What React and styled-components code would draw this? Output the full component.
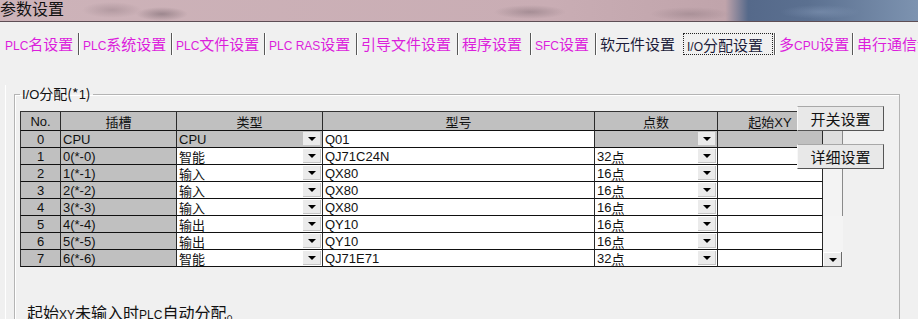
import React from "react";
import styled, { createGlobalStyle } from "styled-components";

const SANS = `"Liberation Sans", "Noto Sans CJK SC", sans-serif`;
const CJK = `"Noto Sans CJK SC", sans-serif`;

const Global = createGlobalStyle`
  html, body { margin: 0; padding: 0; background: #f0f0f0; }
  body { width: 918px; height: 319px; overflow: hidden; font-family: ${SANS}; color: #111; }
`;

const Window = styled.div`
  width: 918px;
  height: 319px;
  overflow: hidden;
  background: #f0f0f0;
`;

const TitleBar = styled.div`
  height: 21px;
  border-bottom: 1px solid #5e4e55;
  background:
    radial-gradient(ellipse 30px 8px at 112px 10px, rgba(120, 100, 108, 0.3), transparent),
    radial-gradient(ellipse 26px 7px at 162px 14px, rgba(100, 84, 92, 0.45), transparent),
    radial-gradient(ellipse 36px 7px at 530px 12px, rgba(100, 84, 92, 0.35), transparent),
    radial-gradient(ellipse 40px 7px at 690px 14px, rgba(100, 84, 92, 0.25), transparent),
    radial-gradient(ellipse 40px 7px at 820px 12px, rgba(150, 170, 200, 0.35), transparent),
    linear-gradient(90deg, #cdb3b9 0%, #c9adb4 60%, #c0a4ab 79%, #55698a 81.5%, #5b7090 88%, #7d93b0 100%);
  font-family: ${CJK};
  font-size: 16px;
  line-height: 16px;
  overflow: hidden;
`;

const TabRow = styled.div`
  display: flex;
  align-items: center;
  height: 22px;
  padding: 11px 0 2px 5px;
  white-space: nowrap;
  overflow: hidden;
`;

const Tab = styled.div`
  flex: none;
  width: ${(p) => p.$w}px;
  height: 22px;
  line-height: 22px;
  font-family: ${CJK};
  font-size: 15px;
  color: ${(p) => (p.$dark ? "#1c1c3a" : "#dc1edc")};
  overflow: hidden;
`;

const Focus = styled.span`
  display: block;
  box-sizing: border-box;
  width: 90px;
  height: 22px;
  padding-left: 3px;
  border: 1px dotted #222;
`;

const Sep = styled.span`
  flex: none;
  width: 1px;
  height: 22px;
  margin-right: 3px;
  background: #585858;
  border-right: 1px solid #ffffff;
`;

const Lat = styled.span`
  font-family: "Liberation Sans", sans-serif;
  font-size: ${(p) => p.$size}px;
`;

const mixed = (text, size) =>
  text
    .split(/([A-Za-z0-9 /]+)/)
    .map((s, i) => (/[A-Za-z0-9]/.test(s) ? <Lat key={i} $size={size}>{s}</Lat> : s));

const Panel = styled.div`
  margin-left: 5px;
  padding-left: 8px;
  border-left: 1px solid #ffffff;
  height: 262px;
`;

const Group = styled.fieldset`
  box-sizing: border-box;
  width: 886px;
  min-width: 0;
  margin: 28px 0 0 0;
  padding: 8px 0 0 5px;
  border: 1px solid #b4b4b4;
  border-bottom: none;
  box-shadow: inset 1px 1px 0 #ffffff;
`;

const Caption = styled.legend`
  padding: 0 2px;
  font-family: ${CJK};
  font-size: 14px;
  line-height: 17px;
`;

const TableWrap = styled.div`
  position: relative;
  width: 823px;
`;

const Grid = styled.div`
  display: grid;
  grid-template-columns: 41px 116px 146px 272px 123px 105px 20px;
  grid-template-rows: 19px repeat(8, 17px);
  border-top: 1px solid #333;
`;

const Cell = styled.div`
  box-sizing: border-box;
  display: flex;
  align-items: center;
  justify-content: ${(p) => (p.$center ? "center" : "flex-start")};
  padding-left: ${(p) => (p.$center ? 0 : 2)}px;
  border-right: 1px solid #2a2a2a;
  border-bottom: 1px solid #111;
  ${(p) => p.$first && "border-left: 1px solid #333;"}
  background: ${(p) => (p.$gray ? "#c0c0c0" : "#ffffff")};
  font-size: 13px;
  white-space: nowrap;
  overflow: hidden;
`;

const Strip = styled.div`
  box-sizing: border-box;
  display: flex;
  align-items: flex-end;
  background: ${(p) => p.$bg};
  border-right: ${(p) => (p.$line ? "1px solid #8a8a8a" : "none")};
`;

const DropBtn = styled.span`
  flex: none;
  margin-left: auto;
  margin-right: 1px;
  width: ${(p) => (p.$big ? 19 : 18)}px;
  height: ${(p) => (p.$big ? 15 : 14)}px;
  display: flex;
  align-items: center;
  justify-content: center;
  background: #ebebeb;
  box-shadow: ${(p) =>
    p.$big ? "inset -1px -1px 0 #6a6a6a, inset 1px 1px 0 #ffffff" : "inset -1px -1px 0 #c4c4c4"};
  &::after {
    content: "";
    border-left: 4px solid transparent;
    border-right: 4px solid transparent;
    border-top: 4px solid #000;
  }
`;

const Dot = styled.span`
  text-decoration: underline dotted #555;
  text-underline-offset: 2px;
`;

const ButtonStack = styled.div`
  position: absolute;
  left: 777px;
  top: -5px;
  display: flex;
  flex-direction: column;
  gap: 13px;
`;

const SideButton = styled.button`
  box-sizing: border-box;
  width: 87px;
  height: 25px;
  padding: 0;
  background: #e8e8e8;
  border: 1px solid;
  border-color: #a8a8a8 #555555 #555555 #f8f8f8;
  font-family: ${CJK};
  font-size: 15px;
  line-height: 20px;
  color: #111;
`;

const Note = styled.div`
  margin-top: 36px;
  padding-left: 7px;
  font-family: ${CJK};
  font-size: 16px;
  line-height: 18px;
  white-space: nowrap;
`;

const tabs = [
  { label: "PLC名设置", w: 73 },
  { label: "PLC系统设置", w: 88 },
  { label: "PLC文件设置", w: 88 },
  { label: "PLC RAS设置", w: 87 },
  { label: "引导文件设置", w: 96 },
  { label: "程序设置", w: 68 },
  { label: "SFC设置", w: 60 },
  { label: "软元件设置", w: 83, dark: true, noSep: true },
  { label: "I/O分配设置", w: 91, dark: true, selected: true },
  { label: "多CPU设置", w: 73 },
  { label: "串行通信设置", w: 90, noSep: true },
];

const rows = [
  { no: "0", slot: "CPU", type: "CPU", model: "Q01", pts: "", cpu: true },
  { no: "1", slot: "0(*-0)", type: "智能", model: "QJ71C24N", pts: "32" },
  { no: "2", slot: "1(*-1)", type: "输入", model: "QX80", pts: "16" },
  { no: "3", slot: "2(*-2)", type: "输入", model: "QX80", pts: "16" },
  { no: "4", slot: "3(*-3)", type: "输入", model: "QX80", pts: "16" },
  { no: "5", slot: "4(*-4)", type: "输出", model: "QY10", pts: "16" },
  { no: "6", slot: "5(*-5)", type: "输出", model: "QY10", pts: "16" },
  { no: "7", slot: "6(*-6)", type: "智能", model: "QJ71E71", pts: "32" },
];

const headers = ["No.", "插槽", "类型", "型号", "点数", "起始XY"];

const stripStyle = (i) => {
  if (i === 0) return { bg: "#dedede", line: true };
  if (i <= 4) return { bg: "#f3f3f3", line: true };
  return { bg: "#f4f4f4", line: false };
};

const App = () => (
  <Window>
    <Global />
    <TitleBar>参数设置</TitleBar>
    <TabRow>
      {tabs.map((t) => (
        <React.Fragment key={t.label}>
          <Tab $w={t.w} $dark={t.dark}>
            {t.selected ? <Focus>{mixed(t.label, 12)}</Focus> : mixed(t.label, 12)}
          </Tab>
          {!t.noSep && <Sep />}
        </React.Fragment>
      ))}
    </TabRow>
    <Panel>
      <Group>
        <Caption>{mixed("I/O分配(*1)", 13)}</Caption>
        <TableWrap>
          <Grid>
            {headers.map((h, i) => (
              <Cell key={h} $gray $center $first={i === 0}>
                {h}
              </Cell>
            ))}
            <Strip $bg="#c0c0c0" />
            {rows.map((r, i) => {
              const s = stripStyle(i);
              return (
                <React.Fragment key={r.no}>
                  <Cell $gray $center $first>
                    {r.no}
                  </Cell>
                  <Cell $gray>{r.slot}</Cell>
                  <Cell $gray={r.cpu}>
                    {r.type}
                    <DropBtn />
                  </Cell>
                  <Cell>{r.model}</Cell>
                  <Cell $gray={r.cpu}>
                    {r.pts && (
                      <>
                        {r.pts}
                        <Dot>点</Dot>
                      </>
                    )}
                    <DropBtn />
                  </Cell>
                  <Cell $gray={r.cpu} />
                  <Strip $bg={s.bg} $line={s.line}>
                    {i === 7 && <DropBtn $big />}
                  </Strip>
                </React.Fragment>
              );
            })}
          </Grid>
          <ButtonStack>
            <SideButton>开关设置</SideButton>
            <SideButton>详细设置</SideButton>
          </ButtonStack>
        </TableWrap>
        <Note>起始{mixed("XY", 12)}未输入时{mixed("PLC", 12)}自动分配。</Note>
      </Group>
    </Panel>
  </Window>
);

export default App;
